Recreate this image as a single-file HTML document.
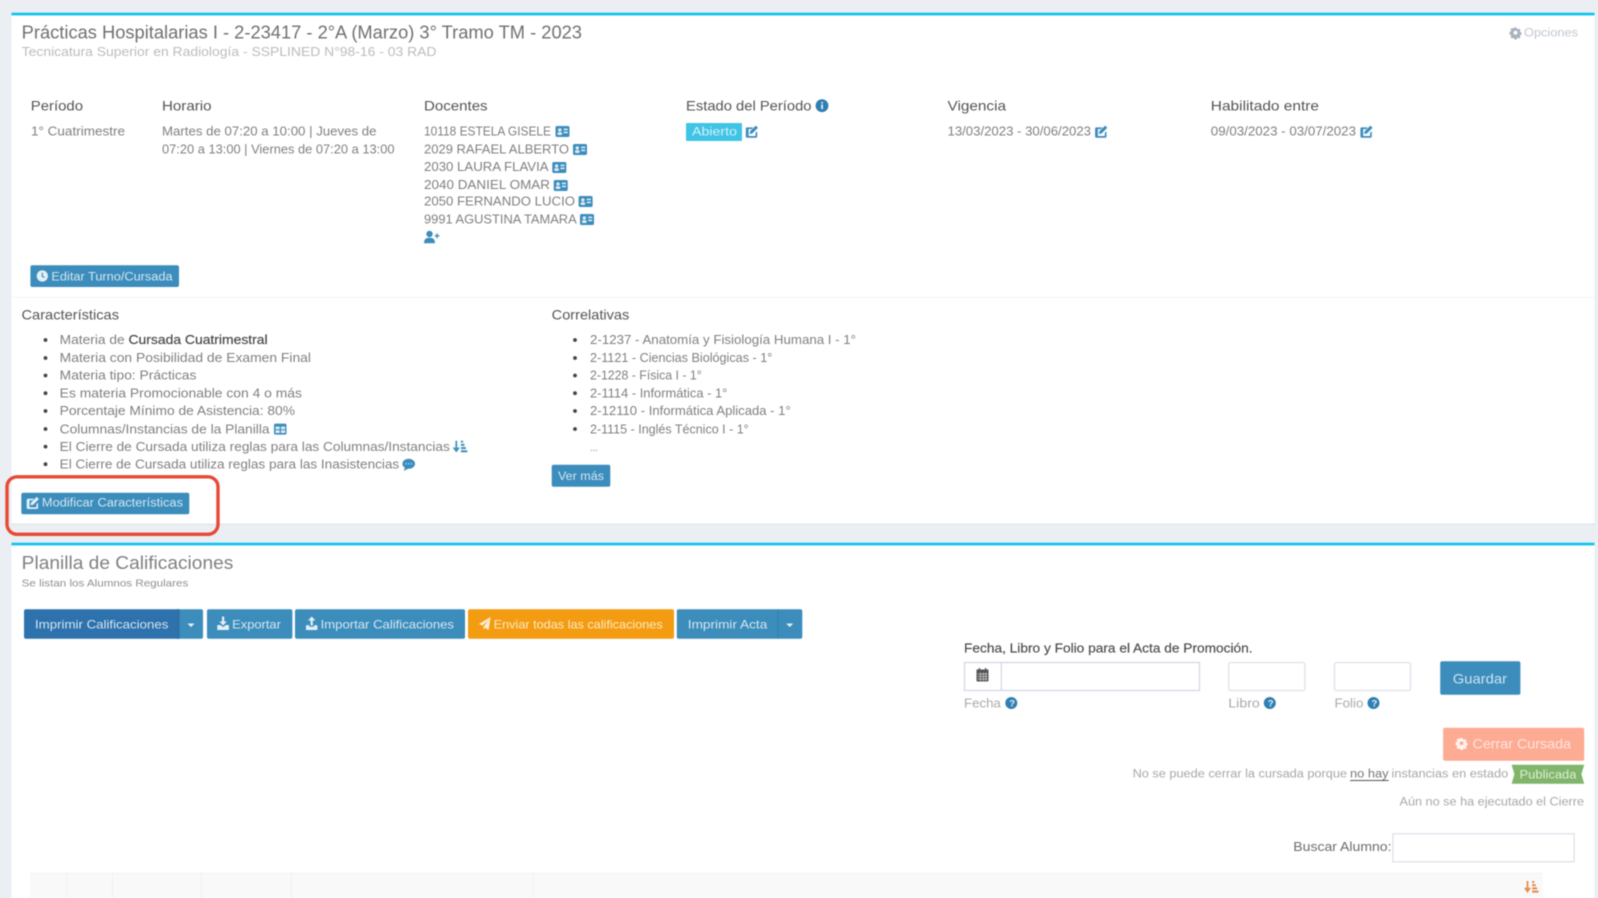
<!DOCTYPE html>
<html lang="es">
<head>
<meta charset="utf-8">
<title>Planilla de Calificaciones</title>
<style>
html,body{margin:0;padding:0;width:1598px;height:898px;overflow:hidden;background:#ebeff4}
svg{display:block;position:absolute;left:0;top:0}
text{font-family:"Liberation Sans",sans-serif;white-space:pre}
.all{filter:blur(.55px)}
.h{font-size:14px;fill:#555}
.b{font-size:12.5px;fill:#808080}
.l{font-size:12.5px;fill:#808080}
.w{font-size:11.5px;fill:#d3e6f2}
.t{font-size:12px;fill:#d5e7f2}
.m{font-size:11.5px;fill:#a8a8a8}
</style>
</head>
<body>
<svg width="1598" height="898" viewBox="0 0 1598 898" xmlns="http://www.w3.org/2000/svg">
<defs>
<g id="idc"><rect x="0" y="0" width="14" height="11" rx="1.6" fill="#3c8dbc"/><circle cx="4.3" cy="4" r="1.7" fill="#dcecf5"/><rect x="2" y="6.2" width="4.6" height="2.8" rx="1" fill="#dcecf5"/><rect x="8.2" y="2.6" width="4" height="1.6" fill="#dcecf5"/><rect x="8.2" y="5.6" width="4" height="1.6" fill="#dcecf5"/></g>
<g id="edit"><path d="M1.8 2.4h6l-1.6 1.7H3.2v6.9h6.9V7.9l1.7-1.6v5a1.4 1.4 0 0 1-1.4 1.4H1.8a1.4 1.4 0 0 1-1.4-1.4V3.8a1.4 1.4 0 0 1 1.4-1.4z" fill="currentColor"/><path d="M10.4.6l2.2 2.2-5.7 5.7-2.7.5.5-2.7z" fill="currentColor"/></g>
<g id="gear"><path d="M0-6.5l1.3.1.5 1.6 1.3.5 1.5-.8 1.7 1.7-.8 1.5.5 1.3 1.6.5v2.4l-1.6.5-.5 1.3.8 1.5-1.7 1.7-1.5-.8-1.3.5-.5 1.6H-1.2l-.5-1.6-1.3-.5-1.5.8-1.7-1.7.8-1.5-.5-1.3-1.6-.5V-1.1l1.6-.5.5-1.3-.8-1.5 1.7-1.7 1.5.8 1.3-.5.5-1.6zM0-2.4a2.4 2.4 0 1 0 0 4.8 2.4 2.4 0 0 0 0-4.8z" fill="currentColor" fill-rule="evenodd" transform="scale(.8)"/></g>
<g id="sort"><path d="M3 0v9.2M.4 6.8L3 10.4l2.6-3.6" fill="none" stroke="currentColor" stroke-width="1.7"/><rect x="7.6" y="0" width="2.2" height="2" fill="currentColor"/><rect x="7.6" y="3.2" width="3.6" height="2" fill="currentColor"/><rect x="7.6" y="6.4" width="5" height="2" fill="currentColor"/><rect x="7.6" y="9.6" width="6.4" height="2" fill="currentColor"/></g>
</defs>
<rect width="1598" height="898" fill="#ebeff4"/>
<g class="all">

<!-- Card 1 -->
<rect x="11.5" y="13" width="1583" height="510.5" rx="2" fill="#fff"/>
<rect x="11.5" y="523.5" width="1583" height="1.2" fill="#e0e4e9"/>
<rect x="11.5" y="12.7" width="1583" height="2.7" fill="#0fc3ef"/>
<rect x="11.5" y="297" width="1583" height="1" fill="#f3f3f3"/>

<text x="21.7" y="38.3" font-size="18" fill="#707070" textLength="560.3" lengthAdjust="spacingAndGlyphs">Prácticas Hospitalarias I - 2-23417 - 2°A (Marzo) 3° Tramo TM - 2023</text>
<text x="21.7" y="56" font-size="13.2" fill="#bcbcbc" textLength="414.8" lengthAdjust="spacingAndGlyphs">Tecnicatura Superior en Radiología - SSPLINED N°98-16 - 03 RAD</text>

<use href="#gear" x="1515.5" y="32.7" color="#aab2bd"/>
<text x="1524" y="36.5" font-size="11.5" fill="#c0c7cf" textLength="54" lengthAdjust="spacingAndGlyphs">Opciones</text>

<text class="h" x="30.8" y="110.7" textLength="52.2" lengthAdjust="spacingAndGlyphs">Período</text>
<text class="h" x="162" y="110.7" textLength="49.5" lengthAdjust="spacingAndGlyphs">Horario</text>
<text class="h" x="424" y="110.7" textLength="63.6" lengthAdjust="spacingAndGlyphs">Docentes</text>
<text class="h" x="686" y="110.7" textLength="125.5" lengthAdjust="spacingAndGlyphs">Estado del Período</text>
<circle cx="822" cy="105.7" r="6.4" fill="#2f7fb3"/><rect x="821.2" y="104.5" width="1.7" height="4.6" fill="#e8f2f8"/><rect x="821.2" y="102" width="1.7" height="1.6" fill="#e8f2f8"/>
<text class="h" x="947.5" y="110.7" textLength="58.5" lengthAdjust="spacingAndGlyphs">Vigencia</text>
<text class="h" x="1210.8" y="110.7" textLength="108.2" lengthAdjust="spacingAndGlyphs">Habilitado entre</text>

<text class="b" x="31" y="135.7" textLength="94" lengthAdjust="spacingAndGlyphs">1° Cuatrimestre</text>
<text class="b" x="162" y="135.7" textLength="214.5" lengthAdjust="spacingAndGlyphs">Martes de 07:20 a 10:00 | Jueves de</text>
<text class="b" x="162" y="153.7" textLength="232.5" lengthAdjust="spacingAndGlyphs">07:20 a 13:00 | Viernes de 07:20 a 13:00</text>

<text class="b" x="424" y="135.7" textLength="127" lengthAdjust="spacingAndGlyphs">10118 ESTELA GISELE</text><use href="#idc" x="555.5" y="126"/>
<text class="b" x="424" y="153.5" textLength="145" lengthAdjust="spacingAndGlyphs">2029 RAFAEL ALBERTO</text><use href="#idc" x="573" y="144"/>
<text class="b" x="424" y="171.2" textLength="124.6" lengthAdjust="spacingAndGlyphs">2030 LAURA FLAVIA</text><use href="#idc" x="552.3" y="162"/>
<text class="b" x="424" y="189" textLength="126" lengthAdjust="spacingAndGlyphs">2040 DANIEL OMAR</text><use href="#idc" x="553.7" y="180"/>
<text class="b" x="424" y="205.5" textLength="151" lengthAdjust="spacingAndGlyphs">2050 FERNANDO LUCIO</text><use href="#idc" x="578.6" y="196"/>
<text class="b" x="424" y="223.3" textLength="152.7" lengthAdjust="spacingAndGlyphs">9991 AGUSTINA TAMARA</text><use href="#idc" x="580" y="214"/>
<g fill="#3c8dbc"><circle cx="429.5" cy="234" r="3.2"/><path d="M424 243.2c0-4 2-5.4 5.5-5.4s5.5 1.4 5.5 5.4z"/><rect x="434.6" y="235.2" width="4.8" height="1.3"/><rect x="436.4" y="233.4" width="1.3" height="4.8"/></g>

<rect x="30.4" y="265.3" width="148.6" height="21.7" rx="2" fill="#3c8dbc"/>
<circle cx="42.3" cy="276" r="5.6" fill="#e3f0f7"/><path d="M42.3 272.8v3.5l2.2 1.2" fill="none" stroke="#3c8dbc" stroke-width="1.2"/>
<text class="w" x="51.4" y="280.7" textLength="121.2" lengthAdjust="spacingAndGlyphs">Editar Turno/Cursada</text>

<rect x="686" y="123" width="56" height="18" rx="1" fill="#40c4e6"/>
<text x="692" y="135.7" font-size="11.5" fill="#d2f1fa" textLength="45" lengthAdjust="spacingAndGlyphs">Abierto</text>
<use href="#edit" x="745.4" y="125" color="#3c8dbc"/>
<text class="b" x="947.5" y="135.7" textLength="143.5" lengthAdjust="spacingAndGlyphs">13/03/2023 - 30/06/2023</text>
<use href="#edit" x="1094.7" y="125" color="#3c8dbc"/>
<text class="b" x="1210.8" y="135.7" textLength="145.2" lengthAdjust="spacingAndGlyphs">09/03/2023 - 03/07/2023</text>
<use href="#edit" x="1360" y="125" color="#3c8dbc"/>

<text class="h" x="21.5" y="319.3" textLength="97.5" lengthAdjust="spacingAndGlyphs">Características</text>
<text class="h" x="551.7" y="319.3" textLength="77.6" lengthAdjust="spacingAndGlyphs">Correlativas</text>

<g fill="#444">
<circle cx="45.5" cy="340" r="1.9"/><circle cx="45.5" cy="358" r="1.9"/><circle cx="45.5" cy="375.5" r="1.9"/><circle cx="45.5" cy="393.2" r="1.9"/><circle cx="45.5" cy="411" r="1.9"/><circle cx="45.5" cy="429" r="1.9"/><circle cx="45.5" cy="446.6" r="1.9"/><circle cx="45.5" cy="464.2" r="1.9"/>
<circle cx="575" cy="340" r="1.9"/><circle cx="575" cy="358" r="1.9"/><circle cx="575" cy="375.5" r="1.9"/><circle cx="575" cy="393.2" r="1.9"/><circle cx="575" cy="411" r="1.9"/><circle cx="575" cy="429" r="1.9"/>
</g>
<text class="l" x="59.7" y="344.2" textLength="65" lengthAdjust="spacingAndGlyphs">Materia de</text>
<text x="128.5" y="344.2" font-size="12.5" fill="#444" stroke="#444" stroke-width=".15" textLength="139.1" lengthAdjust="spacingAndGlyphs">Cursada Cuatrimestral</text>
<text class="l" x="59.7" y="362" textLength="251.3" lengthAdjust="spacingAndGlyphs">Materia con Posibilidad de Examen Final</text>
<text class="l" x="59.7" y="379.5" textLength="136.7" lengthAdjust="spacingAndGlyphs">Materia tipo: Prácticas</text>
<text class="l" x="59.7" y="397.3" textLength="242.3" lengthAdjust="spacingAndGlyphs">Es materia Promocionable con 4 o más</text>
<text class="l" x="59.7" y="415.2" textLength="235.3" lengthAdjust="spacingAndGlyphs">Porcentaje Mínimo de Asistencia: 80%</text>
<text class="l" x="59.7" y="433.3" textLength="209.9" lengthAdjust="spacingAndGlyphs">Columnas/Instancias de la Planilla</text>
<text class="l" x="59.7" y="450.8" textLength="390.1" lengthAdjust="spacingAndGlyphs">El Cierre de Cursada utiliza reglas para las Columnas/Instancias</text>
<text class="l" x="59.7" y="468.4" textLength="339.5" lengthAdjust="spacingAndGlyphs">El Cierre de Cursada utiliza reglas para las Inasistencias</text>

<rect x="274" y="423.6" width="12.5" height="11" rx="1.5" fill="#3c8dbc"/><path d="M275.5 426.6h4.2v2.6h-4.2zM281 426.6h4.2v2.6H281zM275.5 430.2h4.2v2.8h-4.2zM281 430.2h4.2v2.8H281z" fill="#dcecf5"/>
<use href="#sort" x="453.3" y="440.7" color="#3c8dbc"/>
<ellipse cx="408.7" cy="463.8" rx="6.3" ry="5" fill="#3c8dbc"/><path d="M403.5 471l2-4 3 1.6z" fill="#3c8dbc"/><circle cx="406" cy="463.8" r=".7" fill="#cde3f0"/><circle cx="408.7" cy="463.8" r=".7" fill="#cde3f0"/><circle cx="411.4" cy="463.8" r=".7" fill="#cde3f0"/>

<text class="l" x="590" y="344.2" textLength="266" lengthAdjust="spacingAndGlyphs">2-1237 - Anatomía y Fisiología Humana I - 1°</text>
<text class="l" x="590" y="362" textLength="182.3" lengthAdjust="spacingAndGlyphs">2-1121 - Ciencias Biológicas - 1°</text>
<text class="l" x="590" y="379.5" textLength="111.7" lengthAdjust="spacingAndGlyphs">2-1228 - Física I - 1°</text>
<text class="l" x="590" y="397.3" textLength="137.3" lengthAdjust="spacingAndGlyphs">2-1114 - Informática - 1°</text>
<text class="l" x="590" y="415.2" textLength="200.7" lengthAdjust="spacingAndGlyphs">2-12110 - Informática Aplicada - 1°</text>
<text class="l" x="590" y="433.3" textLength="158.7" lengthAdjust="spacingAndGlyphs">2-1115 - Inglés Técnico I - 1°</text>
<text x="590" y="451" font-size="10" fill="#888" textLength="8">...</text>

<rect x="551.7" y="464.7" width="58.6" height="22" rx="2" fill="#3c8dbc"/>
<text class="w" x="558" y="480" textLength="46" lengthAdjust="spacingAndGlyphs">Ver más</text>

<rect x="21.3" y="492.7" width="168" height="21.6" rx="2" fill="#3c8dbc"/>
<use href="#edit" x="26.3" y="496.3" color="#e3f0f7"/>
<text class="w" x="41.9" y="506.7" textLength="141.1" lengthAdjust="spacingAndGlyphs">Modificar Características</text>

<!-- Card 2 -->
<rect x="11.5" y="543" width="1583" height="355" fill="#fff"/>
<rect x="11.5" y="542.7" width="1583" height="2.7" fill="#0fc3ef"/>

<text x="21.7" y="569" font-size="18" fill="#808080" textLength="211.6" lengthAdjust="spacingAndGlyphs">Planilla de Calificaciones</text>
<text x="21.7" y="586.7" font-size="10.5" fill="#8f8f8f" textLength="166.6" lengthAdjust="spacingAndGlyphs">Se listan los Alumnos Regulares</text>

<!-- toolbar -->
<rect x="24" y="609.3" width="155" height="29.4" rx="2" fill="#2e72ad"/>
<rect x="176" y="609.3" width="27" height="29.4" rx="2" fill="#3c8dbc"/>
<rect x="176" y="609.3" width="3" height="29.4" fill="#2e72ad"/>
<rect x="178.5" y="609.3" width="1" height="29.4" fill="#2a6a9b"/>
<path d="M187.5 623.5h7l-3.5 3.6z" fill="#e3f0f7"/>
<text class="t" x="35" y="628.7" textLength="133.4" lengthAdjust="spacingAndGlyphs">Imprimir Calificaciones</text>

<rect x="207" y="609.3" width="85.4" height="29.4" rx="2" fill="#3c8dbc"/>
<path d="M222 616.5h2.2v5h2.6l-3.7 4-3.7-4h2.6zM217.3 625h3l2.8 2 2.8-2h3v5h-11.6z" fill="#e3f0f7"/>
<text class="t" x="232.2" y="628.7" textLength="48.7" lengthAdjust="spacingAndGlyphs">Exportar</text>

<rect x="295" y="609.3" width="170" height="29.4" rx="2" fill="#3c8dbc"/>
<path d="M310.6 625.5h2.2v-5h2.6l-3.7-4-3.7 4h2.6zM306 625.2h3.4v1.5h4.6v-1.5h3.4v4.8H306z" fill="#e3f0f7"/>
<text class="t" x="320.6" y="628.7" textLength="133.4" lengthAdjust="spacingAndGlyphs">Importar Calificaciones</text>

<rect x="468" y="609.3" width="206" height="29.4" rx="2" fill="#f39c12"/>
<path d="M490.6 617l-2 13-3.6-2.4-1.4 2.2v-3.2l5-6.4-6.2 5.4-3.4-1.6z" fill="#ffeed3"/>
<text class="t" x="493.7" y="628.7" textLength="169" lengthAdjust="spacingAndGlyphs" style="fill:#ffe8c4">Enviar todas las calificaciones</text>

<rect x="676.8" y="609.3" width="125.5" height="29.4" rx="2" fill="#3c8dbc"/>
<rect x="777.5" y="609.3" width="1" height="29.4" fill="#337ea9"/>
<path d="M786.2 623.5h7l-3.5 3.6z" fill="#e3f0f7"/>
<text class="t" x="687.8" y="628.7" textLength="79.5" lengthAdjust="spacingAndGlyphs">Imprimir Acta</text>

<!-- Fecha form -->
<text x="964" y="652.3" font-size="13" fill="#4a4a4a" stroke="#4a4a4a" stroke-width=".15" textLength="288.6" lengthAdjust="spacingAndGlyphs">Fecha, Libro y Folio para el Acta de Promoción.</text>
<rect x="964.5" y="662.5" width="235" height="28" fill="#fff" stroke="#d2d8e4" stroke-width="1.3"/>
<rect x="1000.8" y="662.5" width="1.2" height="28" fill="#d2d8e4"/>
<g fill="#555"><rect x="976.5" y="671" width="12" height="10.5" rx="1"/><rect x="976.5" y="669.5" width="12" height="2"/><rect x="978.7" y="668" width="1.4" height="2.5"/><rect x="984.9" y="668" width="1.4" height="2.5"/></g>
<path d="M977.5 674h10M977.5 676.5h10M977.5 679h10M980.5 672.5v8.5M983.5 672.5v8.5M986 672.5v8.5" stroke="#fff" stroke-width=".5" fill="none"/>
<rect x="1228.8" y="662.5" width="76" height="28" rx="2" fill="#fff" stroke="#dde1ea" stroke-width="1.3"/>
<rect x="1334.5" y="662.5" width="76" height="28" rx="2" fill="#fff" stroke="#dde1ea" stroke-width="1.3"/>
<rect x="1440.2" y="661.3" width="80.2" height="33.4" rx="2" fill="#3c8dbc"/>
<text x="1452.8" y="683.3" font-size="14" fill="#cbe3f1" textLength="54.2" lengthAdjust="spacingAndGlyphs">Guardar</text>

<text x="964" y="707.3" font-size="12.5" fill="#aaa" textLength="36.8" lengthAdjust="spacingAndGlyphs">Fecha</text>
<circle cx="1011.3" cy="703" r="6" fill="#2f7fb3"/><text x="1009.3" y="706.5" font-size="9.5" font-weight="bold" fill="#e8f2f8">?</text>
<text x="1228.3" y="707.3" font-size="12.5" fill="#aaa" textLength="31.5" lengthAdjust="spacingAndGlyphs">Libro</text>
<circle cx="1269.8" cy="703" r="6" fill="#2f7fb3"/><text x="1267.8" y="706.5" font-size="9.5" font-weight="bold" fill="#e8f2f8">?</text>
<text x="1334.5" y="707.3" font-size="12.5" fill="#aaa" textLength="28.9" lengthAdjust="spacingAndGlyphs">Folio</text>
<circle cx="1373.5" cy="703" r="6" fill="#2f7fb3"/><text x="1371.5" y="706.5" font-size="9.5" font-weight="bold" fill="#e8f2f8">?</text>

<rect x="1443.1" y="727.7" width="141.1" height="33" rx="2" fill="#fdab93"/>
<use href="#gear" x="1461.6" y="743.3" color="#fff4ef"/>
<text x="1472.5" y="748.3" font-size="14" fill="#ffe6dd" textLength="98.5" lengthAdjust="spacingAndGlyphs">Cerrar Cursada</text>

<text class="m" x="1132.6" y="777.3" textLength="214.4" lengthAdjust="spacingAndGlyphs">No se puede cerrar la cursada porque</text>
<text x="1350" y="777.3" font-size="11.5" fill="#777" textLength="38.6" lengthAdjust="spacingAndGlyphs">no hay</text>
<rect x="1350" y="780" width="38.6" height="1" fill="#555"/>
<text class="m" x="1391.5" y="777.3" textLength="116.7" lengthAdjust="spacingAndGlyphs">instancias en estado</text>
<path d="M1511.6 764.7H1584.2l-2.8 9.5 2.8 9.5h-72.6l2.8-9.5z" fill="#80b56b"/>
<text x="1519.5" y="778.7" font-size="11.5" fill="#dcefd2" textLength="57" lengthAdjust="spacingAndGlyphs">Publicada</text>
<text class="m" x="1399.5" y="805.3" textLength="184.5" lengthAdjust="spacingAndGlyphs">Aún no se ha ejecutado el Cierre</text>

<text x="1293.3" y="851" font-size="13" fill="#6c6c6c" textLength="98.2" lengthAdjust="spacingAndGlyphs">Buscar Alumno:</text>
<rect x="1392.9" y="833.8" width="181.2" height="28" fill="#fff" stroke="#dde1ea" stroke-width="1.3"/>

<!-- table head -->
<rect x="30.3" y="872.7" width="1512.7" height="26" fill="#f9f9f9"/>
<rect x="30.3" y="872.7" width="1512.7" height="1" fill="#f2f2f2"/>
<g fill="#f0f0f0"><rect x="66" y="873" width="1" height="25"/><rect x="112" y="873" width="1" height="25"/><rect x="201" y="873" width="1" height="25"/><rect x="291" y="873" width="1" height="25"/><rect x="533" y="873" width="1" height="25"/></g>
<use href="#sort" x="1524.5" y="881" color="#e08a4c"/>

<!-- red highlight -->
<rect x="7" y="476.8" width="211" height="57.5" rx="10" fill="none" stroke="#e64a35" stroke-width="3.4"/>
</g>
</svg>
</body>
</html>
